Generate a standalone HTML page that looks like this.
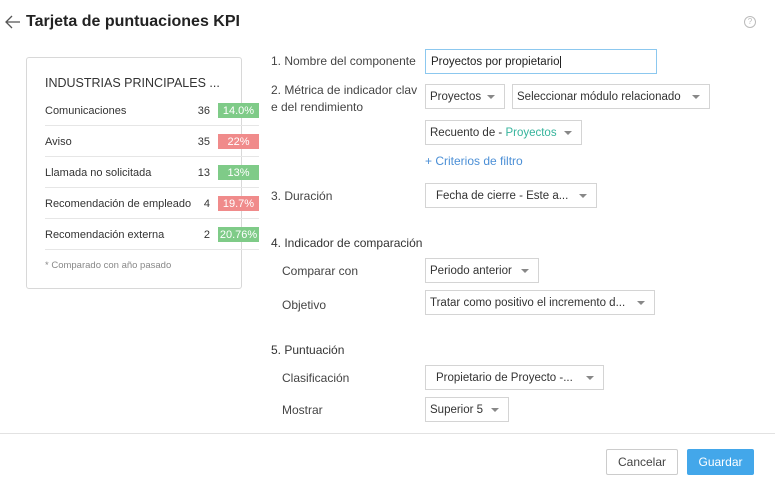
<!DOCTYPE html>
<html><head><meta charset="utf-8"><style>
*{box-sizing:border-box;margin:0;padding:0}
body{width:775px;height:484px;background:#fff;font-family:"Liberation Sans",sans-serif;color:#333;position:relative;overflow:hidden;font-size:12px}
.a{position:absolute;white-space:nowrap}
.sel{position:absolute;border:1px solid #d4d4d4;background:#fff;height:25px;line-height:25px;padding-left:4px;font-size:11.5px;color:#333}
.sel:after{content:"";position:absolute;right:9px;top:10px;border-left:4px solid transparent;border-right:4px solid transparent;border-top:4px solid #888}
.lbl{position:absolute;font-size:12px;color:#444;white-space:nowrap}
.row{position:absolute;left:45px;width:214px;height:31px;border-bottom:1px solid #e6e6e6;font-size:11px;color:#333}
.row span{position:absolute;top:10px}
.bd{position:absolute;right:0;top:8px;width:41px;height:15px;line-height:16px;text-align:center;color:#fff;font-size:11px}
.g{background:#7fcb88}.r{background:#f08b8b}
</style></head><body>
<svg class="a" style="left:4px;top:15px" width="18" height="14"><path d="M16 7H2M8 1L2 7l6 6" fill="none" stroke="#555" stroke-width="1.3"/></svg>
<div class="a" style="left:26px;top:13px;font-size:16px;color:#222;font-weight:bold">Tarjeta de puntuaciones KPI</div>
<div class="a" style="left:744px;top:16px;width:12px;height:12px;border:1px solid #bbb;border-radius:50%;font-size:8px;color:#bbb;text-align:center;line-height:10px">?</div>

<div class="a" style="left:26px;top:57px;width:216px;height:232px;border:1px solid #d8d8d8;border-radius:3px"></div>
<div class="a" style="left:45px;top:76px;font-size:12.5px;color:#333">INDUSTRIAS PRINCIPALES ...</div>
<div class="row" style="top:95px"><span>Comunicaciones</span><span style="right:49px">36</span><div class="bd g">14.0%</div></div>
<div class="row" style="top:126px"><span>Aviso</span><span style="right:49px">35</span><div class="bd r">22%</div></div>
<div class="row" style="top:157px"><span>Llamada no solicitada</span><span style="right:49px">13</span><div class="bd g">13%</div></div>
<div class="row" style="top:188px"><span>Recomendación de empleado</span><span style="right:49px">4</span><div class="bd r">19.7%</div></div>
<div class="row" style="top:219px"><span>Recomendación externa</span><span style="right:49px">2</span><div class="bd g">20.76%</div></div>
<div class="a" style="left:45px;top:260px;font-size:9.5px;color:#888">* Comparado con año pasado</div>

<div class="lbl" style="left:271px;top:54px">1. Nombre del componente</div>
<div class="a" style="left:425px;top:49px;width:232px;height:25px;border:1px solid #8cc8ef;line-height:25px;padding-left:5px;font-size:11.5px;color:#222">Proyectos por propietario<span style="border-left:1px solid #222;margin-left:1px"></span></div>
<div class="lbl" style="left:271px;top:82px;line-height:17px">2. Métrica de indicador clav<br>e del rendimiento</div>
<div class="sel" style="left:425px;top:84px;width:80px">Proyectos</div>
<div class="sel" style="left:512px;top:84px;width:198px">Seleccionar módulo relacionado</div>
<div class="sel" style="left:425px;top:120px;width:157px">Recuento de - <span style="color:#36b49c">Proyectos</span></div>
<div class="a" style="left:425px;top:154px;color:#4b8fd6;font-size:12px">+ Criterios de filtro</div>
<div class="lbl" style="left:271px;top:189px">3. Duración</div>
<div class="sel" style="left:425px;top:183px;width:172px;padding-left:10px">Fecha de cierre - Este a...</div>

<div class="lbl" style="left:271px;top:236px;color:#333">4. Indicador de comparación</div>
<div class="lbl" style="left:282px;top:264px">Comparar con</div>
<div class="sel" style="left:425px;top:258px;width:114px">Periodo anterior</div>
<div class="lbl" style="left:282px;top:298px">Objetivo</div>
<div class="sel" style="left:425px;top:290px;width:230px">Tratar como positivo el incremento d...</div>

<div class="lbl" style="left:271px;top:343px;color:#333">5. Puntuación</div>
<div class="lbl" style="left:282px;top:371px">Clasificación</div>
<div class="sel" style="left:425px;top:365px;width:179px;padding-left:10px">Propietario de Proyecto -...</div>
<div class="lbl" style="left:282px;top:403px">Mostrar</div>
<div class="sel" style="left:425px;top:397px;width:84px">Superior 5</div>

<div class="a" style="left:0;top:433px;width:775px;height:1px;background:#e2e2e2"></div>
<div class="a" style="left:606px;top:449px;width:72px;height:26px;border:1px solid #ccc;border-radius:2px;text-align:center;line-height:24px;font-size:12px;color:#444">Cancelar</div>
<div class="a" style="left:687px;top:449px;width:67px;height:26px;background:#43a7ea;border-radius:2px;text-align:center;line-height:26px;font-size:12px;color:#fff">Guardar</div>
</body></html>
